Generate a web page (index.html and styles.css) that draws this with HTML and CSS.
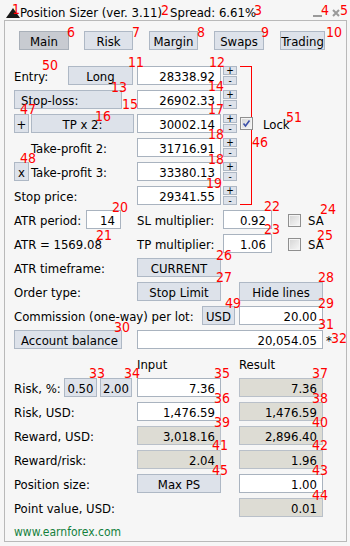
FILE: index.html
```html
<!DOCTYPE html>
<html>
<head>
<meta charset="utf-8">
<link rel="stylesheet" href="styles.css">
</head>
<body>
<div class="win">
  <div class="titlebar">
    <svg class="tri" viewBox="0 0 14 10" width="14" height="10"><polygon points="0,10 7,0 14,10" fill="#1a1a1a"/></svg>
    <span class="title">Position Sizer (ver. 3.11)</span>
    <span class="title spread">Spread: 6.61%</span>
    <span class="minbtn"></span>
    <svg class="closebtn" viewBox="0 0 8 8" width="8" height="8"><path d="M1 1L7 7M7 1L1 7" stroke="#9a9a9a" stroke-width="2"/></svg>
  </div>
  <div class="panel">
    <div class="tabs">
      <div class="btn tab active tab-main">Main</div>
      <div class="btn tab tab-risk">Risk</div>
      <div class="btn tab tab-margin">Margin</div>
      <div class="btn tab tab-swaps">Swaps</div>
      <div class="btn tab tab-trading">Trading</div>
    </div>

    <div class="row row-first">
      <div class="lbl w-entry">Entry:</div>
      <div class="btn w-long">Long</div>
      <div class="inp w-in ml4">28338.92</div>
      <div class="pm"><div class="pmb">+</div><div class="pmb">-</div></div>
    </div>
    <div class="row">
      <div class="btn btn-left w-wide">Stop-loss:</div>
      <div class="inp w-in ml15">26902.33</div>
      <div class="pm"><div class="pmb">+</div><div class="pmb">-</div></div>
    </div>
    <div class="row">
      <div class="btn w-sq">+</div>
      <div class="btn w-tp ml2">TP x 2:</div>
      <div class="inp w-in ml3">30002.14</div>
      <div class="pm"><div class="pmb">+</div><div class="pmb">-</div></div>
      <div class="cb cb-lock"><svg viewBox="0 0 11 11" width="11" height="11"><path d="M2.5 5.5L4.5 8L8.5 2.5" stroke="#3b4fa8" stroke-width="1.6" fill="none"/></svg></div>
      <div class="lbl lock">Lock</div>
    </div>
    <div class="row">
      <div class="lbl w-lab tp-ind">Take-profit 2:</div>
      <div class="inp w-in">31716.91</div>
      <div class="pm"><div class="pmb">+</div><div class="pmb">-</div></div>
    </div>
    <div class="row">
      <div class="btn w-sq">x</div>
      <div class="lbl w-tp3 ml2">Take-profit 3:</div>
      <div class="inp w-in">33380.13</div>
      <div class="pm"><div class="pmb">+</div><div class="pmb">-</div></div>
    </div>
    <div class="row">
      <div class="lbl w-lab">Stop price:</div>
      <div class="inp w-in">29341.55</div>
      <div class="pm"><div class="pmb">+</div><div class="pmb">-</div></div>
    </div>
    <div class="row">
      <div class="lbl w-atr">ATR period:</div>
      <div class="inp w-atrin">14</div>
      <div class="lbl w-mult ml16">SL multiplier:</div>
      <div class="inp w-multin">0.92</div>
      <div class="cb cb-sa"></div>
      <div class="lbl sa">SA</div>
    </div>
    <div class="row">
      <div class="lbl w-lab">ATR = 1569.08</div>
      <div class="lbl w-mult">TP multiplier:</div>
      <div class="inp w-multin">1.06</div>
      <div class="cb cb-sa"></div>
      <div class="lbl sa">SA</div>
    </div>
    <div class="row">
      <div class="lbl w-lab">ATR timeframe:</div>
      <div class="btn w-in">CURRENT</div>
    </div>
    <div class="row">
      <div class="lbl w-lab">Order type:</div>
      <div class="btn w-in">Stop Limit</div>
      <div class="btn w-in ml18">Hide lines</div>
    </div>
    <div class="row">
      <div class="lbl w-comm">Commission (one-way) per lot:</div>
      <div class="btn w-usd">USD</div>
      <div class="inp w-in ml4">20.00</div>
    </div>
    <div class="row">
      <div class="btn btn-left w-wide">Account balance</div>
      <div class="inp w-acct ml15">20,054.05</div>
      <div class="lbl star">*</div>
    </div>
    <div class="row">
      <div class="lbl w-lab"></div>
      <div class="lbl w-hdr">Input</div>
      <div class="lbl">Result</div>
    </div>
    <div class="row">
      <div class="lbl w-riskp">Risk, %:</div>
      <div class="btn w-q1">0.50</div>
      <div class="btn w-q2 ml3">2.00</div>
      <div class="inp w-in ml5">7.36</div>
      <div class="inp res w-in ml18">7.36</div>
    </div>
    <div class="row">
      <div class="lbl w-lab">Risk, USD:</div>
      <div class="inp w-in">1,476.59</div>
      <div class="inp res w-in ml18">1,476.59</div>
    </div>
    <div class="row">
      <div class="lbl w-lab">Reward, USD:</div>
      <div class="inp res w-in">3,018.16</div>
      <div class="inp res w-in ml18">2,896.40</div>
    </div>
    <div class="row">
      <div class="lbl w-lab">Reward/risk:</div>
      <div class="inp res w-in">2.04</div>
      <div class="inp res w-in ml18">1.96</div>
    </div>
    <div class="row">
      <div class="lbl w-lab">Position size:</div>
      <div class="btn w-in">Max PS</div>
      <div class="inp w-in ml18">1.00</div>
    </div>
    <div class="row">
      <div class="lbl w-pv">Point value, USD:</div>
      <div class="inp res w-in">0.01</div>
    </div>
    <div class="row">
      <div class="lbl site">www.earnforex.com</div>
    </div>
  </div>

  <div class="bracket"></div>

  <span class="an a1">1</span>
  <span class="an a2">2</span>
  <span class="an a3">3</span>
  <span class="an a4">4</span>
  <span class="an a5">5</span>
  <span class="an a6">6</span>
  <span class="an a7">7</span>
  <span class="an a8">8</span>
  <span class="an a9">9</span>
  <span class="an a10">10</span>
  <span class="an a50">50</span>
  <span class="an a11">11</span>
  <span class="an a12">12</span>
  <span class="an a13">13</span>
  <span class="an a14">14</span>
  <span class="an a47">47</span>
  <span class="an a16">16</span>
  <span class="an a15">15</span>
  <span class="an a17">17</span>
  <span class="an a51">51</span>
  <span class="an a46">46</span>
  <span class="an a18a">18</span>
  <span class="an a48">48</span>
  <span class="an a18b">18</span>
  <span class="an a19">19</span>
  <span class="an a20">20</span>
  <span class="an a22">22</span>
  <span class="an a24">24</span>
  <span class="an a21">21</span>
  <span class="an a23">23</span>
  <span class="an a25">25</span>
  <span class="an a26">26</span>
  <span class="an a27">27</span>
  <span class="an a28">28</span>
  <span class="an a49">49</span>
  <span class="an a29">29</span>
  <span class="an a30">30</span>
  <span class="an a31">31</span>
  <span class="an a32">32</span>
  <span class="an a33">33</span>
  <span class="an a34">34</span>
  <span class="an a35">35</span>
  <span class="an a37">37</span>
  <span class="an a36">36</span>
  <span class="an a38">38</span>
  <span class="an a39">39</span>
  <span class="an a40">40</span>
  <span class="an a41">41</span>
  <span class="an a42">42</span>
  <span class="an a45">45</span>
  <span class="an a43">43</span>
  <span class="an a44">44</span>
</div>
</body>
</html>
```

FILE: styles.css
```css
* { box-sizing: border-box; margin: 0; padding: 0; }
html, body { width: 350px; height: 546px; overflow: hidden; background: #ffffff; }
body {
  font-family: "DejaVu Sans Condensed", "DejaVu Sans", sans-serif;
  font-size: 13px;
  color: #000;
}
.win { position: relative; width: 350px; height: 546px; background: #f6f6f6; }

.titlebar { height: 20px; display: flex; align-items: flex-start; padding-left: 6px; }
.tri { margin-top: 8px; flex: none; }
.title { padding-top: 5px; line-height: 16px; white-space: nowrap; }
.spread { margin-left: 8px; }
.minbtn { margin-left: auto; margin-top: 15px; width: 9px; height: 2px; background: #9a9a9a; }
.closebtn { margin-left: 10px; margin-top: 9px; margin-right: 10px; }

.panel {
  margin-left: 4px; width: 343px; height: 522px;
  border: 1px solid #b9b9b9;
  padding: 10px 0 0 9px;
}

.tabs { display: flex; height: 20px; padding-left: 5px; }
.tab { height: 20px; padding-top: 2px; line-height: 16px; }
.tab-main { width: 50px; }
.tab-risk { width: 49px; margin-left: 15px; }
.tab-margin { width: 49px; margin-left: 16px; }
.tab-swaps { width: 50px; margin-left: 16px; }
.tab-trading { width: 45px; margin-left: 16px; }
.tab.active { background: #c8cbd1; border-color: #a9b0b9; }

.row { display: flex; height: 19px; margin-top: 5px; align-items: flex-start; }
.row-first { margin-top: 15px; }

.lbl { height: 19px; line-height: 19px; padding-top: 1px; white-space: nowrap; }
.btn {
  height: 19px; border: 1px solid #aeb8c5; background: #dde2ea;
  text-align: center; line-height: 15px; padding-top: 2px; white-space: nowrap;
}
.btn-left { text-align: left; padding-left: 6px; }
.inp {
  height: 19px; border: 1px solid #a9b3bf; background: #fff;
  text-align: right; padding-right: 5px; line-height: 15px; padding-top: 2px; white-space: nowrap;
}
.res { background: #dddcd4; border-color: #b9c0c9; }

.pm { display: flex; flex-direction: column; gap: 1px; margin-left: 2px; width: 14px; }
.pmb {
  height: 9px; border: 1px solid #aeb8c5; background: #dde2ea;
  font-size: 10px; line-height: 7px; text-align: center;
}

.cb {
  width: 13px; height: 13px; border: 1px solid #8f8f8f;
  background: linear-gradient(135deg, #d4d4d4, #f8f8f8);
  box-shadow: inset 0 0 0 1px #f4f4f4;
}
.cb-lock { margin-left: 3px; margin-top: 3px; position: relative; z-index: 2; display: flex; align-items: center; justify-content: center; }
.lock { margin-left: 10px; }
.cb-sa { margin-left: 16px; margin-top: 4px; }
.sa { margin-left: 7px; }

.w-entry { width: 54px; }
.w-long { width: 65px; }
.w-in { width: 84px; }
.w-wide { width: 108px; }
.w-sq { width: 15px; }
.w-tp { width: 103px; }
.w-lab { width: 123px; }
.tp-ind { padding-left: 17px; }
.w-tp3 { width: 106px; }
.w-atr { width: 72px; }
.w-atrin { width: 35px; }
.w-mult { width: 86px; }
.w-multin { width: 49px; }
.w-comm { width: 188px; }
.w-usd { width: 33px; }
.w-acct { width: 186px; }
.star { margin-left: 3px; }
.w-hdr { width: 102px; }
.w-riskp { width: 50px; }
.w-q1 { width: 33px; }
.w-q2 { width: 32px; }
.w-pv { width: 225px; }
.site { color: #14803c; font-size: 12px; }

.ml2 { margin-left: 2px; }
.ml3 { margin-left: 3px; }
.ml4 { margin-left: 4px; }
.ml5 { margin-left: 5px; }
.ml15 { margin-left: 15px; }
.ml16 { margin-left: 16px; }
.ml18 { margin-left: 18px; }

.bracket {
  position: absolute; left: 240px; top: 66px; width: 12px; height: 139px;
  border: 1px solid #ff0000; border-left: none;
}

.an {
  position: absolute; color: #ff0000; font-size: 14px; line-height: 14px;
  font-family: "DejaVu Sans Condensed", "DejaVu Sans", sans-serif;
}
.a1 { left: 12px; top: 2px; }
.a2 { left: 161px; top: 3px; }
.a3 { left: 254px; top: 3px; }
.a4 { left: 321px; top: 3px; }
.a5 { left: 340px; top: 3px; }
.a6 { left: 67px; top: 25px; }
.a7 { left: 132px; top: 25px; }
.a8 { left: 197px; top: 25px; }
.a9 { left: 261px; top: 25px; }
.a10 { left: 326px; top: 25px; }
.a50 { left: 42px; top: 58px; }
.a11 { left: 128px; top: 55px; }
.a12 { left: 209px; top: 55px; }
.a13 { left: 111px; top: 80px; }
.a14 { left: 208px; top: 79px; }
.a47 { left: 20px; top: 102px; }
.a16 { left: 95px; top: 109px; }
.a15 { left: 122px; top: 97px; }
.a17 { left: 208px; top: 102px; }
.a51 { left: 286px; top: 110px; }
.a46 { left: 252px; top: 135px; }
.a18a { left: 208px; top: 127px; }
.a48 { left: 20px; top: 151px; }
.a18b { left: 208px; top: 152px; }
.a19 { left: 206px; top: 176px; }
.a20 { left: 112px; top: 200px; }
.a22 { left: 264px; top: 199px; }
.a24 { left: 320px; top: 202px; }
.a21 { left: 96px; top: 228px; }
.a23 { left: 264px; top: 222px; }
.a25 { left: 317px; top: 228px; }
.a26 { left: 216px; top: 248px; }
.a27 { left: 216px; top: 270px; }
.a28 { left: 318px; top: 270px; }
.a49 { left: 225px; top: 296px; }
.a29 { left: 318px; top: 296px; }
.a30 { left: 114px; top: 320px; }
.a31 { left: 318px; top: 317px; }
.a32 { left: 331px; top: 331px; }
.a33 { left: 89px; top: 366px; }
.a34 { left: 124px; top: 366px; }
.a35 { left: 214px; top: 366px; }
.a37 { left: 312px; top: 366px; }
.a36 { left: 214px; top: 391px; }
.a38 { left: 312px; top: 391px; }
.a39 { left: 214px; top: 415px; }
.a40 { left: 312px; top: 415px; }
.a41 { left: 212px; top: 438px; }
.a42 { left: 312px; top: 438px; }
.a45 { left: 212px; top: 463px; }
.a43 { left: 312px; top: 463px; }
.a44 { left: 312px; top: 488px; }
```
